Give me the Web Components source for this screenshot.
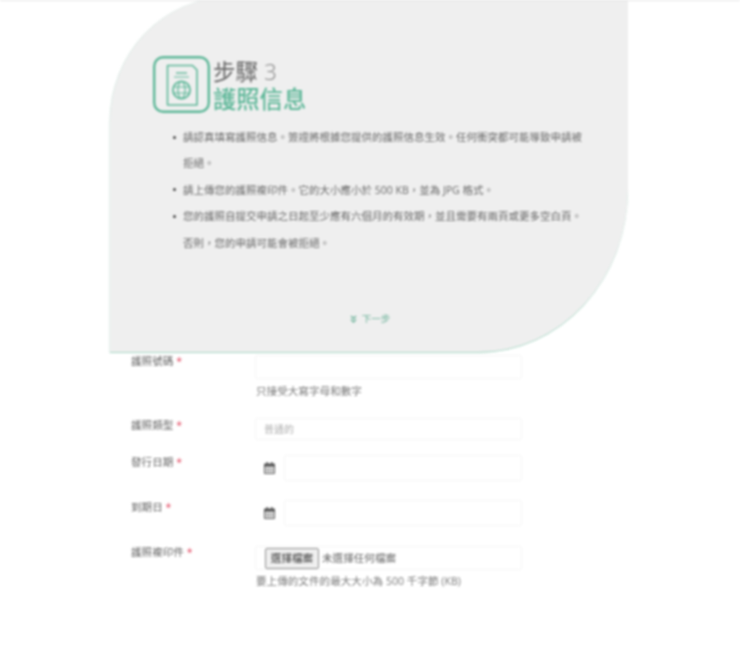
<!DOCTYPE html>
<html lang="zh-Hant">
<head>
<meta charset="utf-8">
<title>護照信息</title>
<style>
  html, body { margin: 0; background: #fff; }
  body {
    font-family: "Open Sans", "Noto Sans CJK TC", sans-serif;
    color: #6f6f6f;
  }
</style>
</head>
<body>
<page-shell>
  <step-panel step="步驟" number="3" title="護照信息" next="下一步">
    <li>請認真填寫護照信息。簽證將根據您提供的護照信息生效。任何衝突都可能導致申請被拒絕。</li>
    <li>請上傳您的護照複印件。它的大小應小於 500 KB，並為 JPG 格式。</li>
    <li>您的護照自提交申請之日起至少應有六個月的有效期，並且需要有兩頁或更多空白頁。否則，您的申請可能會被拒絕。</li>
  </step-panel>

  <form-row label="護照號碼" style="--row-top:2px;--label-top:-1px;--help-gap:5px">
    <text-field style="--field-height:24px"></text-field>
    <span slot="help">只接受大寫字母和數字</span>
  </form-row>
  <form-row label="護照類型" style="--row-top:20px">
    <text-field placeholder="普通的" style="--field-height:22px"></text-field>
  </form-row>
  <form-row label="發行日期" style="--row-top:15px">
    <date-field></date-field>
  </form-row>
  <form-row label="到期日" style="--row-top:19px">
    <date-field></date-field>
  </form-row>
  <form-row label="護照複印件" style="--row-top:20px;--label-top:-1px">
    <file-field button="選擇檔案" empty="未選擇任何檔案"></file-field>
    <span slot="help">要上傳的文件的最大大小為 500 千字節 (KB)</span>
  </form-row>
</page-shell>

<script>
(() => {
  const shellTemplate = document.createElement('template');
  shellTemplate.innerHTML = `
    <style>
      :host {
        display: block;
        box-sizing: border-box;
        height: 671px;
        overflow: hidden;
        border-top: 1px solid #e4e4e4;
        filter: blur(0.85px);
      }
    </style>
    <slot></slot>
  `;

  class PageShell extends HTMLElement {
    constructor() {
      super();
      const root = this.attachShadow({ mode: 'open' });
      root.append(shellTemplate.content.cloneNode(true));
    }
  }

  const panelTemplate = document.createElement('template');
  panelTemplate.innerHTML = `
    <style>
      :host {
        display: block;
        box-sizing: border-box;
        width: 518px;
        height: 356px;
        margin-left: 110px;
        margin-top: -4px;
        background: #efefef;
        border-bottom: 1px solid #a5d6c3;
        border-top-left-radius: 120px 125px;
        border-bottom-right-radius: 150px 163px;
        box-shadow: -0.5px 0 0 #c9e3d9;
      }
      .head {
        display: flex;
        align-items: center;
        gap: 3px;
        padding: 59px 0 0 43px;
      }
      .logo { width: 57px; height: 57px; flex: none; display: block; }
      .titles { display: flex; flex-direction: column; margin-top: 2px; }
      .step { font-size: 22.5px; line-height: 27px; color: #666; font-weight: 400; }
      .num { color: #858585; font-weight: 300; }
      .title { font-size: 23.3px; line-height: 28px; color: #5db798; font-weight: 500; }
      ul {
        margin: 11px 0 0;
        padding: 0 44px 0 73px;
        list-style: none;
        font-size: 10.5px;
        line-height: 26.4px;
        color: #6a6a6a;
      }
      ::slotted(li) { position: relative; }
      ::slotted(li)::before {
        content: "";
        position: absolute;
        left: -10px;
        top: 11.5px;
        width: 3px;
        height: 3px;
        border-radius: 50%;
        background: #444;
      }
      .next {
        display: flex;
        justify-content: center;
        align-items: center;
        gap: 5px;
        margin-top: 56px;
        padding-left: 2px;
        font-size: 9.5px;
        line-height: 14px;
        color: #6fb39b;
      }
      .next svg { width: 7px; height: 8px; display: block; }
    </style>
    <div class="head">
      <svg class="logo" viewBox="0 0 57 57" fill="none" stroke="#5db798">
        <rect x="1.2" y="1.2" width="54.6" height="54.6" rx="9" stroke-width="2.4"/>
        <path d="M14.5 9.5h25l4.5 4.5v35H14.5z" stroke-width="1.6" stroke-linejoin="round"/>
        <path d="M23 17h11" stroke-width="1.4"/>
        <path d="M21 21h15" stroke-width="1"/>
        <circle cx="28.5" cy="34" r="8.6" stroke-width="1.8"/>
        <ellipse cx="28.5" cy="34" rx="3.6" ry="8.6" stroke-width="1.2"/>
        <path d="M20.2 31h16.6M20.2 37h16.6" stroke-width="1.2"/>
      </svg>
      <div class="titles">
        <span class="step"><span class="step-text"></span> <span class="num"></span></span>
        <span class="title"></span>
      </div>
    </div>
    <ul><slot></slot></ul>
    <div class="next">
      <svg viewBox="0 0 7 8" fill="none" stroke="#6fb39b" stroke-width="1.3"><path d="M1 1l2.5 2.5L6 1M1 4.5L3.5 7 6 4.5"/></svg>
      <span class="next-label"></span>
    </div>
  `;

  class StepPanel extends HTMLElement {
    constructor() {
      super();
      const root = this.attachShadow({ mode: 'open' });
      root.append(panelTemplate.content.cloneNode(true));
    }

    connectedCallback() {
      const root = this.shadowRoot;
      root.querySelector('.step-text').textContent = this.getAttribute('step');
      root.querySelector('.num').textContent = this.getAttribute('number');
      root.querySelector('.title').textContent = this.getAttribute('title');
      root.querySelector('.next-label').textContent = this.getAttribute('next');
    }
  }

  const rowTemplate = document.createElement('template');
  rowTemplate.innerHTML = `
    <style>
      :host {
        display: grid;
        grid-template-columns: 124px 267px;
        margin: var(--row-top, 0) 0 0 131px;
        font-size: 10.6px;
        line-height: 14px;
      }
      .label { margin-top: var(--label-top, 0); color: #666; white-space: nowrap; }
      .req { color: #e0405a; }
      ::slotted([slot="help"]) {
        display: block;
        margin: var(--help-gap, 4px) 0 0 1px;
        color: #7b7b7b;
        white-space: nowrap;
      }
    </style>
    <div class="label"><span class="text"></span> <span class="req">*</span></div>
    <div>
      <slot></slot>
      <slot name="help"></slot>
    </div>
  `;

  class FormRow extends HTMLElement {
    constructor() {
      super();
      const root = this.attachShadow({ mode: 'open' });
      root.append(rowTemplate.content.cloneNode(true));
    }

    connectedCallback() {
      this.shadowRoot.querySelector('.text').textContent = this.getAttribute('label');
    }
  }

  const textTemplate = document.createElement('template');
  textTemplate.innerHTML = `
    <style>
      :host {
        display: block;
        box-sizing: border-box;
        height: var(--field-height, 24px);
        border: 1px solid #f6f6f6;
        border-radius: 2px;
        padding: 0 8px;
        font-size: 10px;
        line-height: calc(var(--field-height, 24px) - 2px);
        color: #b0b0b0;
      }
    </style>
    <span class="ph"></span>
  `;

  class TextField extends HTMLElement {
    constructor() {
      super();
      const root = this.attachShadow({ mode: 'open' });
      root.append(textTemplate.content.cloneNode(true));
    }

    connectedCallback() {
      this.shadowRoot.querySelector('.ph').textContent = this.getAttribute('placeholder') || '';
    }
  }

  const dateTemplate = document.createElement('template');
  dateTemplate.innerHTML = `
    <style>
      :host { display: flex; height: 26px; }
      .addon {
        box-sizing: border-box;
        width: 29px;
        display: flex;
        align-items: center;
        justify-content: center;
        padding-right: 1px;
      }
      .addon svg { width: 11px; height: 12px; display: block; }
      .input {
        flex: 1;
        border: 1px solid #f6f6f6;
        border-radius: 2px;
      }
    </style>
    <div class="addon">
      <svg viewBox="0 0 11 12" fill="#555">
        <path d="M2.5 0h1.4v2H2.5zM7.1 0h1.4v2H7.1z"/>
        <path d="M1 1.4h9a1 1 0 0 1 1 1V11a1 1 0 0 1-1 1H1a1 1 0 0 1-1-1V2.4a1 1 0 0 1 1-1zM1 4.8V11h9V4.8z"/>
        <path d="M2 6h1.5v1.4H2zM4.7 6h1.5v1.4H4.7zM7.5 6H9v1.4H7.5zM2 8.5h1.5v1.4H2zM4.7 8.5h1.5v1.4H4.7zM7.5 8.5H9v1.4H7.5z"/>
      </svg>
    </div>
    <div class="input"></div>
  `;

  class DateField extends HTMLElement {
    constructor() {
      super();
      const root = this.attachShadow({ mode: 'open' });
      root.append(dateTemplate.content.cloneNode(true));
    }
  }

  const fileTemplate = document.createElement('template');
  fileTemplate.innerHTML = `
    <style>
      :host {
        display: flex;
        align-items: center;
        gap: 3px;
        box-sizing: border-box;
        height: 24px;
        padding-left: 9px;
        border: 1px solid #f6f6f6;
        border-radius: 2px;
        font-size: 10.6px;
        color: #666;
      }
      .btn {
        box-sizing: border-box;
        height: 21px;
        width: 54px;
        display: flex;
        align-items: center;
        justify-content: center;
        background: #efefef;
        border: 1px solid #8f8f8f;
        border-radius: 2px;
        color: #333;
      }
    </style>
    <span class="btn"></span>
    <span class="empty"></span>
  `;

  class FileField extends HTMLElement {
    constructor() {
      super();
      const root = this.attachShadow({ mode: 'open' });
      root.append(fileTemplate.content.cloneNode(true));
    }

    connectedCallback() {
      this.shadowRoot.querySelector('.btn').textContent = this.getAttribute('button');
      this.shadowRoot.querySelector('.empty').textContent = this.getAttribute('empty');
    }
  }

  customElements.define('page-shell', PageShell);
  customElements.define('step-panel', StepPanel);
  customElements.define('form-row', FormRow);
  customElements.define('text-field', TextField);
  customElements.define('date-field', DateField);
  customElements.define('file-field', FileField);
})();
</script>
</body>
</html>
